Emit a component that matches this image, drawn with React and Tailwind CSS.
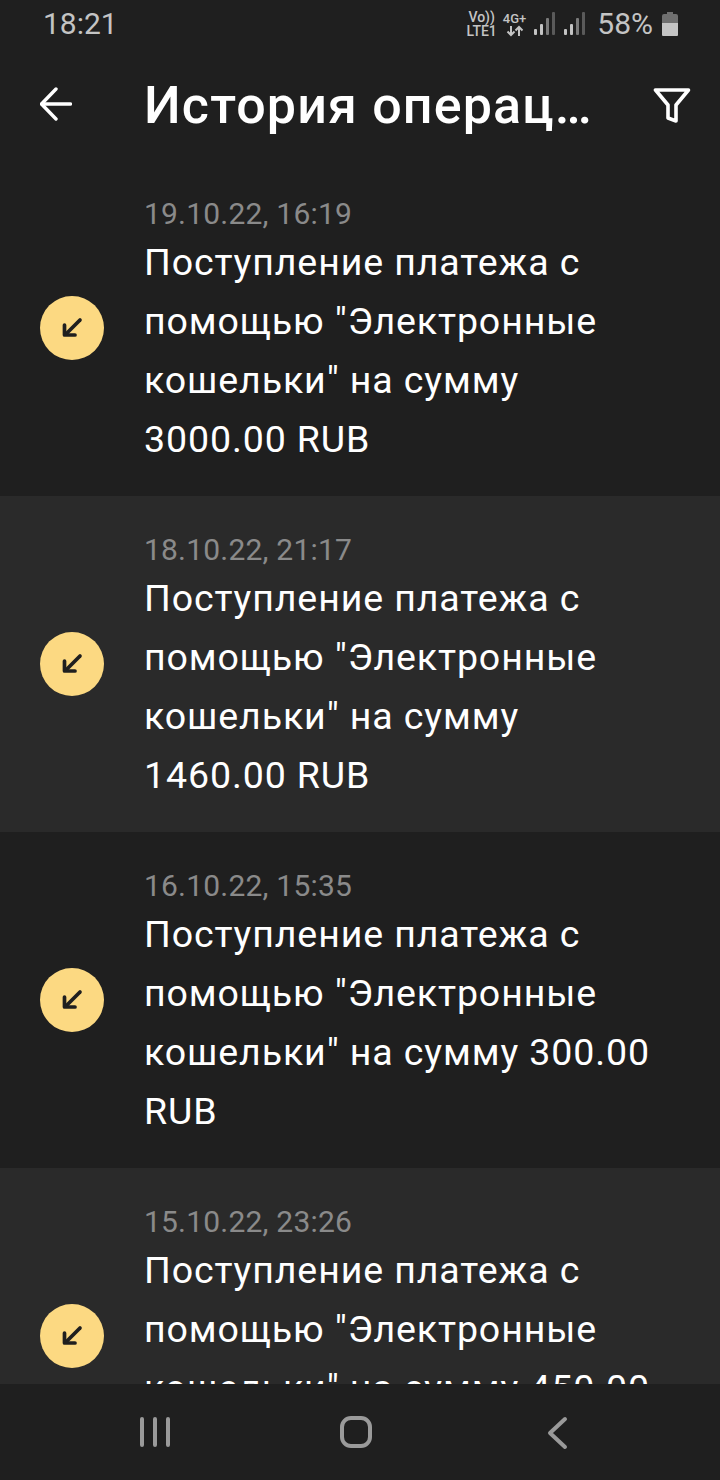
const rows = [
  { date: "19.10.22, 16:19", amount: "3000.00", alt: false },
  { date: "18.10.22, 21:17", amount: "1460.00", alt: true },
  { date: "16.10.22, 15:35", amount: "300.00", alt: false },
  { date: "15.10.22, 23:26", amount: "450.00", alt: true },
];

function Signal() {
  return (
    <svg width="22" height="24" viewBox="0 0 22 24" className="block">
      <rect x="0" y="17" width="3" height="6" rx="1" fill="#c4c4c4" />
      <rect x="6" y="12" width="3" height="11" rx="1" fill="#c4c4c4" />
      <rect x="12" y="6" width="3" height="17" rx="1" fill="#7a7a7a" />
      <rect x="18" y="0" width="3" height="23" rx="1" fill="#5a5a5a" />
    </svg>
  );
}

function Row({ date, amount, alt }) {
  return (
    <div className={`flex shrink-0 h-[336px] items-center pl-10 ${alt ? "bg-[#2a2a2a]" : "bg-[#1f1f1f]"}`}>
      <div className="flex h-16 w-16 shrink-0 items-center justify-center rounded-full bg-[#fcd982]">
        <svg width="24" height="24" viewBox="0 0 24 24" fill="none" stroke="#1f1f1f" strokeWidth="3.7" strokeLinecap="round" strokeLinejoin="round">
          <path d="M20 4 6 18" />
          <path d="M4.500 9V19H15" />
        </svg>
      </div>
      <div className="ml-10 w-[515px] self-start pt-[34px]">
        <div className="h-[39px] text-[30px] leading-10 tracking-[0.2px] text-[#8a8a8a]">{date}</div>
        <div className="text-[37.5px] leading-[59px] tracking-[0.9px] text-white">
          Поступление платежа с помощью "Электронные кошельки" на сумму {amount} RUB
        </div>
      </div>
    </div>
  );
}

export default function App() {
  return (
    <div className="flex h-[1480px] w-[720px] flex-col overflow-hidden bg-[#1f1f1f] font-['Roboto',sans-serif]">
      <div className="flex h-12 shrink-0 items-center justify-between pl-[43px] pr-[42px]">
        <span className="text-[30px] leading-none text-[#c4c4c4]">18:21</span>
        <div className="flex items-center">
          <div className="flex flex-col items-center text-[14px] font-medium leading-[14px] text-[#c4c4c4]">
            <span>Vo))</span>
            <span>LTE1</span>
          </div>
          <div className="ml-[6px] flex flex-col items-center text-[13px] font-medium leading-[13px] text-[#c4c4c4]">
            <span>4G+</span>
            <svg width="18" height="12" viewBox="0 0 18 12" fill="none" stroke="#c4c4c4" strokeWidth="2">
              <path d="M5 1v9M1.500 6.500 5 10l3.500-3.500" />
              <path d="M13 11V2M9.500 5.500 13 2l3.500 3.500" />
            </svg>
          </div>
          <div className="ml-[8px]"><Signal /></div>
          <div className="ml-[8px]"><Signal /></div>
          <span className="ml-[11px] text-[30px] leading-none text-[#c4c4c4]">58%</span>
          <svg width="16" height="24" viewBox="0 0 16 24" className="ml-[9px]">
            <path d="M5 0h6v2h3a2 2 0 0 1 2 2v7H0V4a2 2 0 0 1 2-2h3z" fill="#6f6f6f" />
            <path d="M0 11h16v12a1 1 0 0 1-1 1H1a1 1 0 0 1-1-1z" fill="#c4c4c4" />
          </svg>
        </div>
      </div>

      <div className="flex h-[112px] shrink-0 items-center pl-10 pr-[29px]">
        <svg width="32" height="34" viewBox="0 0 32 34" fill="none" stroke="#fff" strokeWidth="3.4" strokeLinecap="round" strokeLinejoin="round" className="shrink-0">
          <path d="M30.500 17H2" />
          <path d="M16 2 1.500 17 16 32" />
        </svg>
        <h1 className="ml-[72px] w-[450px] shrink-0 truncate pt-[3px] text-[52px] leading-tight font-medium tracking-[1.15px] text-white">
          История операций
        </h1>
        <svg width="38" height="36" viewBox="0 0 38 36" fill="none" stroke="#fff" strokeWidth="3.6" strokeLinejoin="round" className="ml-auto mt-[3px] shrink-0">
          <path d="M2.500 2h33L23 17v16l-8-3V17z" />
        </svg>
      </div>

      <div className="flex min-h-0 flex-1 flex-col overflow-hidden">
        {rows.map((r) => <Row key={r.date} {...r} />)}
      </div>

      <div className="flex h-24 shrink-0 items-center bg-[#1f1f1f]">
        <svg width="720" height="96" viewBox="0 0 720 96" fill="none" stroke="#9a9a9a" strokeLinecap="round" strokeLinejoin="round">
          <path d="M142 35v26M155 35v26M168 35v26" strokeWidth="4" />
          <rect x="342" y="34" width="28" height="28" rx="9" strokeWidth="4" />
          <path d="M565 35 550 49l15 14" strokeWidth="4" />
        </svg>
      </div>
    </div>
  );
}
